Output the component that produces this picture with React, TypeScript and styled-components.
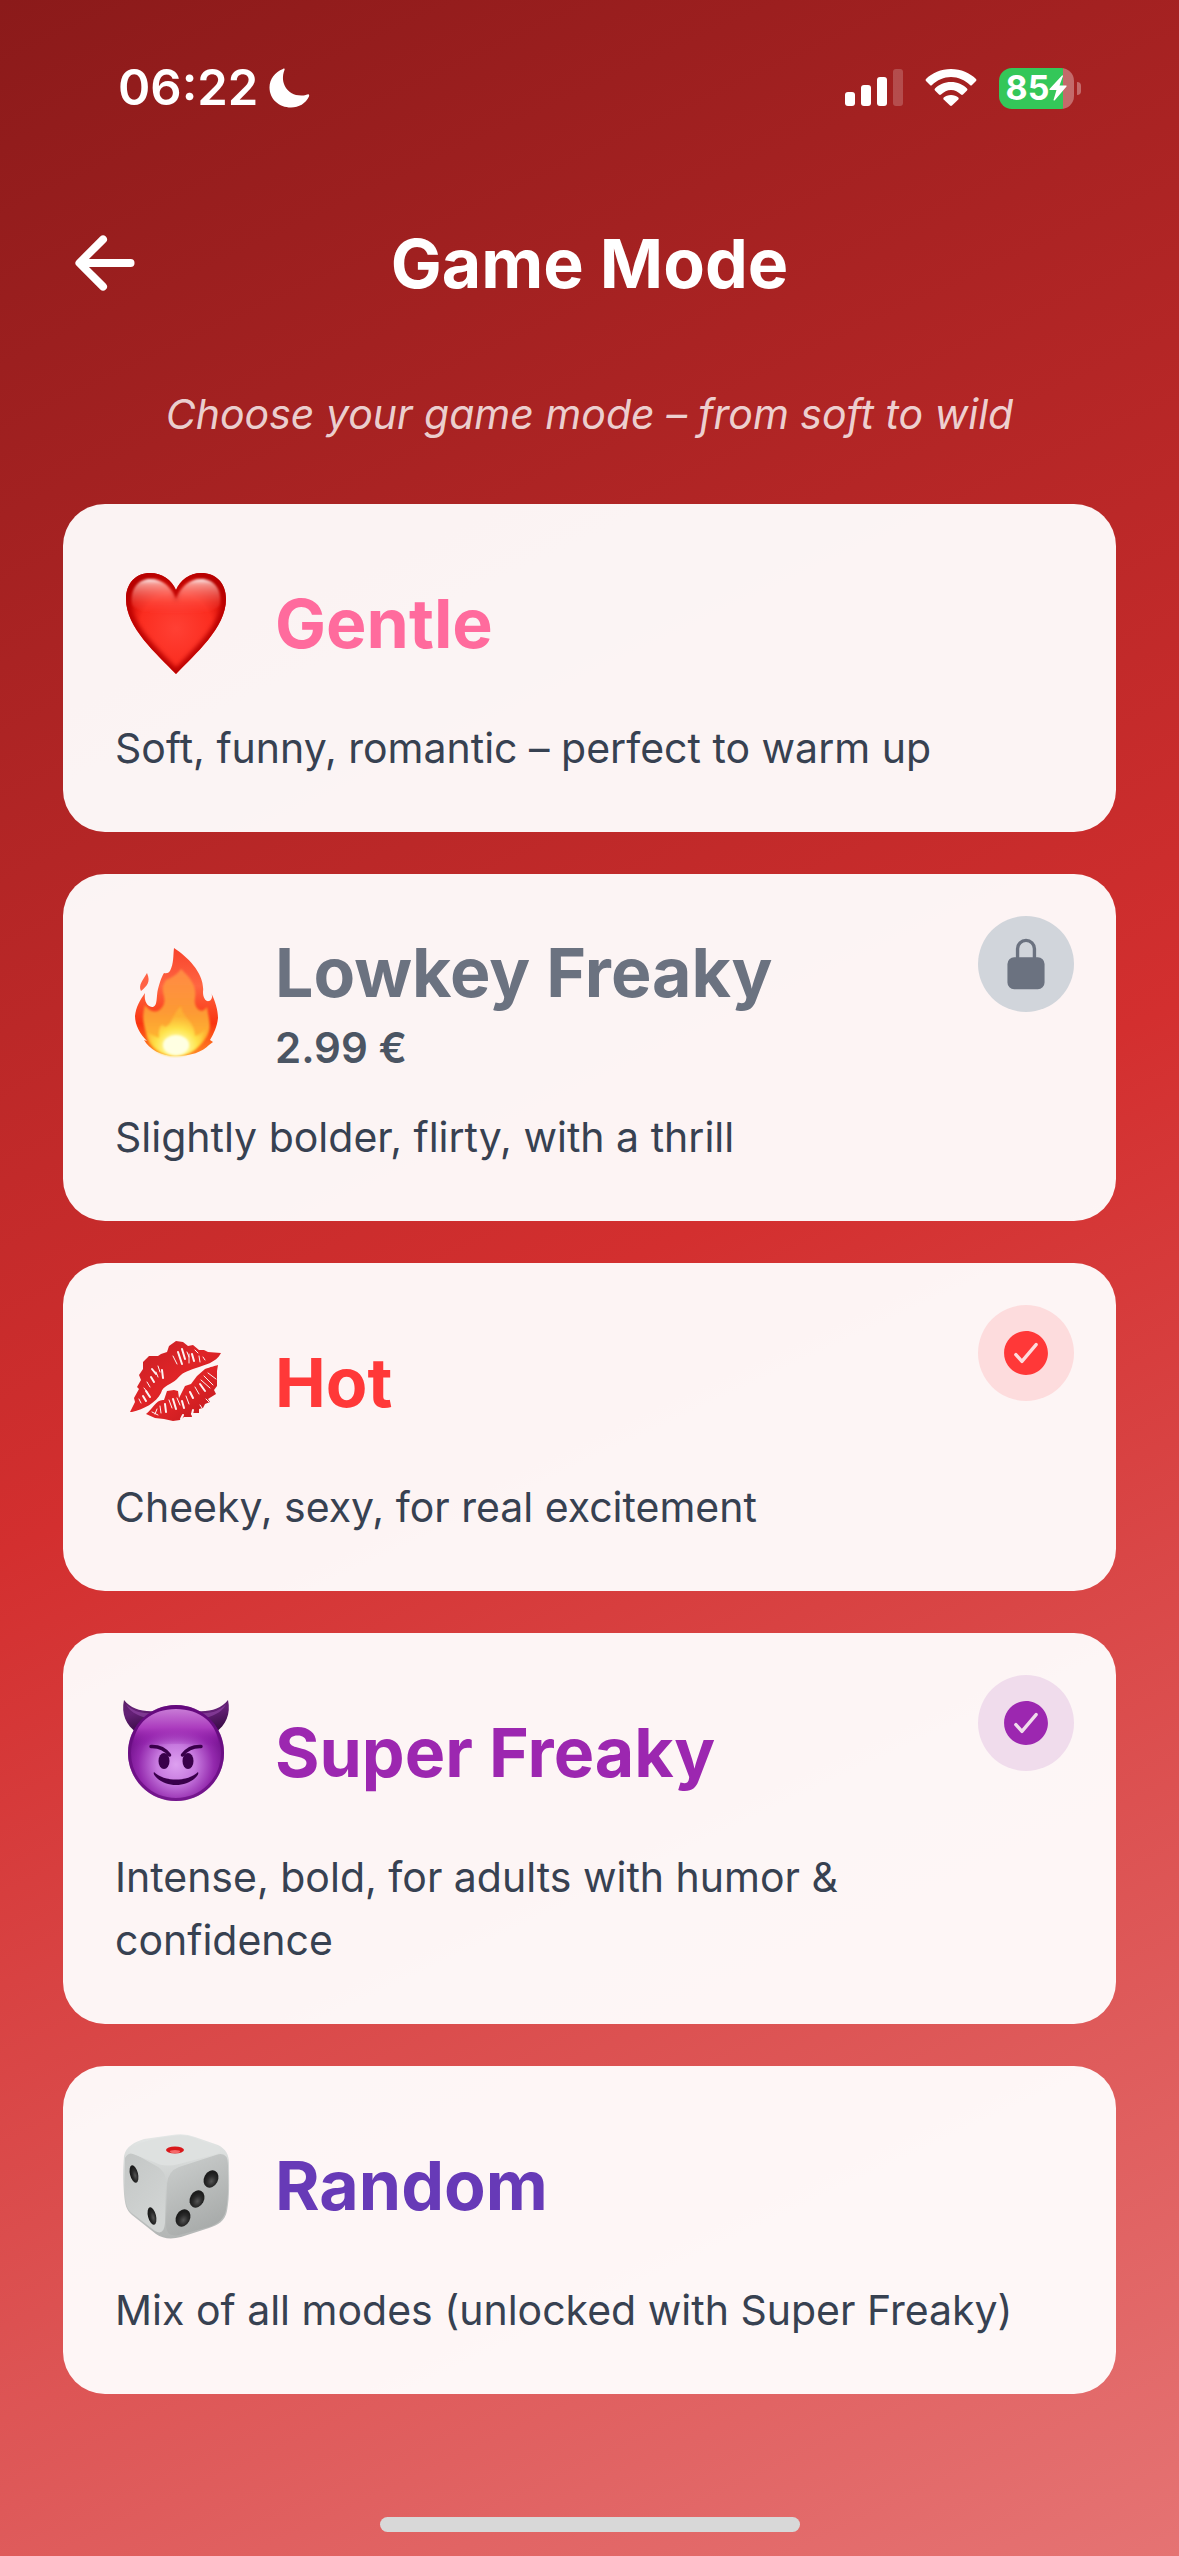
import React from "react";
import styled, { createGlobalStyle } from "styled-components";
import { IoArrowBack, IoCheckmarkCircle, IoLockClosed } from "react-icons/io5";

const GlobalStyle = createGlobalStyle`
  * { box-sizing: border-box; }
  body { margin: 0; }
`;

const Screen = styled.div`
  display: flex;
  flex-direction: column;
  min-height: 100vh;
  background: linear-gradient(155deg, #8b1a1a 0%, #d32f2f 50%, #e57373 100%);
  font-family: Inter, "Liberation Sans", sans-serif;
  color: #ffffff;
`;

const StatusBar = styled.div`
  display: flex;
  align-items: center;
  justify-content: space-between;
  height: 176px;
  padding: 0 98px 0 118px;
`;

const StatusGroup = styled.div<{ $gap: number }>`
  display: flex;
  align-items: center;
  gap: ${(p) => p.$gap}px;
`;

const Clock = styled.time`
  font-size: 49px;
  line-height: 60px;
  font-weight: 600;
`;

const BatteryBox = styled.div`
  display: flex;
  align-items: center;
  gap: 3px;
`;

const BatteryBody = styled.div<{ $level: number }>`
  display: flex;
  align-items: center;
  justify-content: center;
  width: 75px;
  height: 41px;
  border-radius: 13px;
  background: linear-gradient(
    to right,
    #34c759 ${(p) => p.$level}%,
    rgba(255, 255, 255, 0.33) ${(p) => p.$level}%
  );
  font-size: 34px;
  line-height: 40px;
  font-weight: 700;
`;

const BatteryCap = styled.span`
  width: 4px;
  height: 13px;
  border-radius: 0 6px 6px 0;
  background: rgba(255, 255, 255, 0.33);
`;

const Header = styled.header`
  display: grid;
  grid-template-columns: 84px 1fr 84px;
  align-items: center;
  height: 173px;
  padding: 0 63px;
`;

const BackButton = styled.button`
  display: flex;
  padding: 0;
  border: 0;
  background: none;
  color: inherit;
  font-size: 84px;
  cursor: pointer;
`;

const Title = styled.h1`
  margin: 0;
  font-size: 68px;
  line-height: 88px;
  font-weight: 700;
  text-align: center;
`;

const Subtitle = styled.p`
  margin: 34px 63px 58px;
  font-size: 41px;
  line-height: 63px;
  font-style: italic;
  text-align: center;
  color: rgba(255, 255, 255, 0.8);
`;

const ModeList = styled.main`
  display: flex;
  flex-direction: column;
  gap: 42px;
  padding: 0 63px;
`;

const Card = styled.button`
  position: relative;
  display: flex;
  flex-direction: column;
  gap: 28px;
  width: 100%;
  padding: 52px;
  border: 0;
  border-radius: 42px;
  background: rgba(255, 255, 255, 0.95);
  font-family: inherit;
  text-align: left;
  cursor: pointer;
`;

const CardHead = styled.span`
  display: flex;
  align-items: center;
  gap: 40px;
  min-height: 133px;
`;

const Emoji = styled.svg`
  flex: none;
  width: 120px;
  height: 120px;
`;

const Names = styled.span`
  display: flex;
  flex-direction: column;
`;

const ModeName = styled.span<{ $color: string }>`
  font-size: 68px;
  line-height: 92px;
  font-weight: 700;
  color: ${(p) => p.$color};
`;

const Price = styled.span`
  font-size: 42px;
  line-height: 60px;
  font-weight: 600;
  color: #4b5563;
`;

const Description = styled.span`
  font-size: 41px;
  line-height: 63px;
  color: #374151;
`;

const Badge = styled.span<{ $bg: string; $fg: string }>`
  position: absolute;
  top: 42px;
  right: 42px;
  display: flex;
  align-items: center;
  justify-content: center;
  width: 96px;
  height: 96px;
  border-radius: 50%;
  background: ${(p) => p.$bg};
  color: ${(p) => p.$fg};
  font-size: 54px;
`;

const HomeIndicator = styled.div`
  width: 420px;
  height: 15px;
  margin: auto auto 24px;
  border-radius: 8px;
  background: #d8d8d8;
`;

const Moon = () => (
  <svg width="42" height="42" viewBox="0 0 42 42" aria-hidden="true">
    <path
      d="M15 2C16 1 17 1.600 16.500 3C11.500 15 19 29 34 28.500C36 28.500 38 28 39.500 27.500C41 27 41.500 28 41 29.500C37.500 36.500 31 40.500 23 40.500C11 40.500 1.500 32 1.500 20.500C1.500 12 7 5 15 2Z"
      fill="#fff"
    />
  </svg>
);

const Signal = () => (
  <svg width="58" height="38" viewBox="0 0 58 38" fill="#fff" aria-hidden="true">
    <rect x="0" y="23" width="10" height="14" rx="3" />
    <rect x="16" y="16" width="10" height="21" rx="3" />
    <rect x="32" y="8" width="10" height="29" rx="3" />
    <rect x="48" y="0" width="10" height="37" rx="3" opacity="0.2" />
  </svg>
);

const Wifi = () => (
  <svg width="52" height="38" viewBox="0 0 52 38" fill="#fff" aria-hidden="true">
    <path d="M26 0C36 0 45 4 51 10Q52 11 51 12L47 16Q46 17 45 16C40 11 33 8 26 8C19 8 12 11 7 16Q6 17 5 16L1 12Q0 11 1 10C7 4 16 0 26 0Z" />
    <path d="M26 13C32.500 13 38 15.500 42 19.500Q43 20.500 42 21.500L38 25.500Q37 26.300 36 25.500C33 22.800 30 21 26 21C22 21 19 22.800 16 25.500Q15 26.300 14 25.500L10 21.500Q9 20.500 10 19.500C14 15.500 19.500 13 26 13Z" />
    <path d="M26 26C29 26 31.500 27 33.300 28.500Q34.200 29.500 33.300 30.400L27 36.600Q26 37.500 25 36.600L18.700 30.400Q17.800 29.500 18.700 28.500C20.500 27 23 26 26 26Z" />
  </svg>
);

const Bolt = () => (
  <svg width="18" height="26" viewBox="0 0 18 26" aria-hidden="true">
    <path d="M13 0.500L0.500 14Q0 15 1 15H7.500L4.500 25Q5 26 6 25L17.500 11.500Q18 10.500 17 10.500H10.500L14 1Q13.700 0 13 0.500Z" fill="#fff" />
  </svg>
);

const heartShape =
  "M61 111C42 91 11 65 11 36C11 20 21 10 35 10C47 10 57 17 61 27C65 17 75 10 86 10C101 10 111 20 111 36C111 65 80 91 61 111Z";

const Heart = () => (
  <Emoji viewBox="0 0 120 120" aria-hidden="true">
    <defs>
      <radialGradient id="heartFill" cx="0.5" cy="0.55" r="0.6">
        <stop offset="0" stopColor="#ff4034" />
        <stop offset="0.6" stopColor="#fb2d20" />
        <stop offset="0.85" stopColor="#d80f08" />
        <stop offset="1" stopColor="#b80300" />
      </radialGradient>
      <linearGradient id="heartShine" x1="0" y1="0" x2="0" y2="1">
        <stop offset="0" stopColor="#fff" stopOpacity="0.95" />
        <stop offset="0.15" stopColor="#ffc0b8" stopOpacity="0.75" />
        <stop offset="0.65" stopColor="#ff6a5e" stopOpacity="0.35" />
        <stop offset="1" stopColor="#ff4438" stopOpacity="0" />
      </linearGradient>
      <clipPath id="heartClip"><path d={heartShape} /></clipPath>
      <filter id="heartSoft"><feGaussianBlur stdDeviation="1" /></filter>
      <filter id="heartRim"><feGaussianBlur stdDeviation="2" /></filter>
    </defs>
    <path d={heartShape} fill="url(#heartFill)" />
    <g clipPath="url(#heartClip)">
      <path d={heartShape} fill="none" stroke="#b80400" strokeWidth="9" opacity="0.9" filter="url(#heartRim)" />
    </g>
    <path
      d="M17 41C15 25 24 16 35 16C48 16 56 24 61 36C66 24 74 16 86 16C98 16 107 25 105 41C103 55 20 55 17 41Z"
      fill="url(#heartShine)" filter="url(#heartSoft)"
    />
  </Emoji>
);

const Fire = () => (
  <Emoji viewBox="0 0 120 120" aria-hidden="true">
    <defs>
      <linearGradient id="fireOuter" x1="0" y1="0" x2="0" y2="1">
        <stop offset="0" stopColor="#f8432c" />
        <stop offset="0.35" stopColor="#ff6542" />
        <stop offset="0.7" stopColor="#f93410" />
        <stop offset="1" stopColor="#ff8a25" />
      </linearGradient>
      <linearGradient id="fireMiddle" x1="0" y1="0" x2="0" y2="1">
        <stop offset="0" stopColor="#ff8a45" />
        <stop offset="0.5" stopColor="#fd9a34" />
        <stop offset="1" stopColor="#ffc82b" />
      </linearGradient>
      <radialGradient id="fireCore" cx="0.5" cy="0.82" r="0.62">
        <stop offset="0" stopColor="#ffffe5" />
        <stop offset="0.3" stopColor="#fff894" />
        <stop offset="0.6" stopColor="#fee24a" />
        <stop offset="1" stopColor="#fdb535" stopOpacity="0.8" />
      </radialGradient>
      <filter id="fireSoft"><feGaussianBlur stdDeviation="1" /></filter>
    </defs>
    <path
      d="M59 6C73 15 90 32 88 50C88 56 91 60 94 59C97 58 98 54 96 51C100 58 103 68 103 76C102 85 99 91 95 98L98 100L94 103C87 110 76 114 61 114C46 114 34 107 29 98L32 99C25 92 20 83 20 74C21 65 25 58 30 51C29 58 31 64 37 65C43 65 41 55 43 47C45 40 46 36 49 31Q53 32 55 29C59 21 58 14 59 6Z"
      fill="url(#fireOuter)"
    />
    <path d="M32 31C36 40 32 44 26 49C23 43 28 38 32 31Z" fill="#ff6245" />
    <path
      d="M66 27C75 36 82 43 80 56C78 65 86 74 92 65C94 79 97 84 92 94C84 108 73 114 61 114C47 114 34 108 31 91C28 79 27 75 30 63C35 71 43 72 48 64C53 54 43 50 51 38C56 36 63 32 66 27Z"
      fill="url(#fireMiddle)" filter="url(#fireSoft)"
    />
    <path
      d="M66 64C67 76 80 79 80 94C88 91 89 89 90 86C90 100 78 114 61 114C46 114 35 104 33 91L44 96C43 84 47 80 50 85C58 82 56 74 66 64Z"
      fill="url(#fireCore)" filter="url(#fireSoft)"
    />
    <ellipse cx="61" cy="103" rx="13" ry="10" fill="#ffffe2" filter="url(#fireSoft)" />
  </Emoji>
);

const Kiss = () => (
  <Emoji viewBox="0 0 120 120" aria-hidden="true">
    <defs>
      <linearGradient id="lipsFill" x1="0" y1="0" x2="1" y2="1">
        <stop offset="0" stopColor="#c51f24" />
        <stop offset="0.5" stopColor="#e02427" />
        <stop offset="1" stopColor="#bd171c" />
      </linearGradient>
    </defs>
    <path
      d="M15 90L20 80L19 76L24 67L22 65L26 58L24 53L28 47V40L34 34L43 34L46 32L52 30L54 24L61 19L68 20L73 24L78 23L84 28L89 28L93 30L106 31C101 41 89 43 81 46C70 50 68 50 62 57C56 63 48 63 46 71C41 81 29 87 17 90Z"
      fill="url(#lipsFill)"
    />
    <path
      d="M31 92C38 87 41 77 49 78L52 69L59 68L63 69L64 76L70 64L76 62L82 54L90 47C96 45 99 44 103 43L102 49L102 64L99 68L101 72L93 77L95 80L90 82L88 86L84 87L84 91L76 91L77 95L69 95L65 98L58 99L49 97L40 96Z"
      fill="url(#lipsFill)"
    />
    <g stroke="#fdf3f3" fill="none" strokeLinecap="round">
      <path strokeWidth="2" d="M63 30L67 42M67 27L70 37M77 32L79 39M37 47L41 52M36 55L39 60M47 48L48 56M28 74L31 79M31 69L35 75" />
      <path strokeWidth="1" d="M58 34L62 42M74 32V41M72 30L74 35M84 34L85 40M88 35L90 38M32 60L35 65M29 66L33 71M43 44L45 50M41 50L43 55M24 77L26 81M80 28L83 31" />
      <path strokeWidth="2" d="M58 77L61 87M67 79L69 86M50 82L51 90M75 70L78 76M85 62L90 69M68 93L66 97M78 88L77 92" />
      <path strokeWidth="1" d="M89 54L98 63M86 58L95 66M93 51L101 57M80 65L84 72M71 74L74 82M62 76L65 83M54 78L57 86M45 84L46 91M42 87L40 92M37 90L43 93M91 77L94 80M85 83L87 86" />
    </g>
  </Emoji>
);

const Devil = () => (
  <Emoji viewBox="0 0 120 120" aria-hidden="true">
    <defs>
      <linearGradient id="hornFill" x1="0" y1="0" x2="0.3" y2="1">
        <stop offset="0" stopColor="#5c2169" />
        <stop offset="0.45" stopColor="#642076" />
        <stop offset="1" stopColor="#390c45" />
      </linearGradient>
      <radialGradient id="devilFace" cx="0.5" cy="0.62" r="0.58">
        <stop offset="0" stopColor="#dda0f0" />
        <stop offset="0.35" stopColor="#c77adf" />
        <stop offset="0.68" stopColor="#9329ad" />
        <stop offset="1" stopColor="#660980" />
      </radialGradient>
      <linearGradient id="devilShine" x1="0" y1="0" x2="0" y2="1">
        <stop offset="0" stopColor="#c87bd6" />
        <stop offset="0.5" stopColor="#ab3bbe" />
        <stop offset="1" stopColor="#8a10a5" stopOpacity="0" />
      </linearGradient>
    </defs>
    <path d="M9 8C16 17 27 20 41 19L22 41C11 33 6 22 9 8Z" fill="url(#hornFill)" />
    <path d="M113 8C106 17 95 20 81 19L100 41C111 33 116 22 113 8Z" fill="url(#hornFill)" />
    <path d="M11 12C17 19 27 22 37 21L31 26C21 23 14 19 11 12Z" fill="#8d43a1" opacity="0.7" />
    <path d="M111 12C105 19 95 22 85 21L91 26C101 23 108 19 111 12Z" fill="#8d43a1" opacity="0.7" />
    <circle cx="61" cy="61" r="48" fill="url(#devilFace)" />
    <circle cx="61" cy="61" r="46.500" fill="none" stroke="#650b7d" strokeWidth="3" opacity="0.7" />
    <path d="M18 55C19 31 37 17 61 17C85 17 103 31 104 55C91 51 31 51 18 55Z" fill="url(#devilShine)" />
    <ellipse cx="49" cy="69" rx="5.500" ry="8" fill="#39004a" />
    <ellipse cx="73" cy="69" rx="5.500" ry="8" fill="#39004a" />
    <path d="M36 54.500Q48 54 54.500 63M86 54.500Q74 54 67.500 63" stroke="#39004a" strokeWidth="3.500" fill="none" strokeLinecap="round" />
    <path d="M39 80C49 90 73 90 83 80Q84 82 82 84C72 96 50 96 40 84Q38 82 39 80Z" fill="#39004a" />
  </Emoji>
);

const Dice = () => (
  <Emoji viewBox="0 -1 120 120" aria-hidden="true">
    <defs>
      <linearGradient id="diceBase" x1="0" y1="0" x2="0" y2="1">
        <stop offset="0" stopColor="#e4e7e6" />
        <stop offset="1" stopColor="#b2b5b4" />
      </linearGradient>
      <linearGradient id="diceLeft" x1="0" y1="0" x2="0.6" y2="1">
        <stop offset="0" stopColor="#c3c6c5" />
        <stop offset="1" stopColor="#d2d5d4" />
      </linearGradient>
      <linearGradient id="diceRight" x1="0" y1="0" x2="0.4" y2="1">
        <stop offset="0" stopColor="#cdd0cf" />
        <stop offset="1" stopColor="#a9acab" />
      </linearGradient>
      <radialGradient id="dicePip" cx="0.6" cy="0.6" r="0.5">
        <stop offset="0" stopColor="#555" />
        <stop offset="0.6" stopColor="#2b2b2b" />
        <stop offset="1" stopColor="#1c1c1c" />
      </radialGradient>
    </defs>
    <path
      d="M9 30C11 20 20 16 29 13L57 9Q70 7 80 11L103 19C111 23 114 29 114 37C114 57 115 69 112 85C110 95 103 99 94 102L66 111Q51 115 41 108L17 89C11 84 10 78 9 68C8 54 8 43 9 30Z"
      fill="url(#diceBase)"
    />
    <path d="M10 32Q14 25 22 29L43 41Q50 45 51 55L50 97Q49 110 40 105L18 88C11 83 11 77 10 66Z" fill="url(#diceLeft)" />
    <path d="M52 58Q53 45 64 41L101 29Q113 25 113 39C113 57 114 70 111 84C109 93 103 98 94 101L64 109Q51 112 51 98Z" fill="url(#diceRight)" />
    <path d="M16 23Q25 14 58 10Q71 8 80 12L102 21Q110 26 98 29L64 38Q49 42 39 36L18 28Q12 26 16 23Z" fill="#dee1e0" />
    <ellipse cx="60" cy="24" rx="9" ry="3.500" fill="#d9181b" />
    <ellipse cx="60" cy="25.500" rx="5" ry="1.500" fill="#f6696a" />
    <g fill="url(#dicePip)">
      <ellipse cx="19" cy="48" rx="4" ry="9" transform="rotate(-14 19 48)" />
      <ellipse cx="37" cy="90" rx="4" ry="9" transform="rotate(-14 37 90)" />
      <ellipse cx="96" cy="53" rx="7" ry="9" transform="rotate(28 96 53)" />
      <ellipse cx="82" cy="73" rx="7" ry="9" transform="rotate(28 82 73)" />
      <ellipse cx="68" cy="92" rx="7" ry="9" transform="rotate(28 68 92)" />
    </g>
  </Emoji>
);

type Mode = {
  name: string;
  color: string;
  description: string;
  icon: React.ReactNode;
  price?: string;
  badge?: { bg: string; icon: React.ReactNode };
};

const modes: Mode[] = [
  { name: "Gentle", color: "#ff6b9d", description: "Soft, funny, romantic – perfect to warm up", icon: <Heart /> },
  {
    name: "Lowkey Freaky",
    color: "#6b7280",
    description: "Slightly bolder, flirty, with a thrill",
    icon: <Fire />,
    price: "2.99 €",
    badge: { bg: "#d1d5db", icon: <IoLockClosed title="Locked" /> },
  },
  {
    name: "Hot",
    color: "#ff3838",
    description: "Cheeky, sexy, for real excitement",
    icon: <Kiss />,
    badge: { bg: "#fddcdd", icon: <IoCheckmarkCircle title="Unlocked" /> },
  },
  {
    name: "Super Freaky",
    color: "#9c27b0",
    description: "Intense, bold, for adults with humor & confidence",
    icon: <Devil />,
    badge: { bg: "#f0dcec", icon: <IoCheckmarkCircle title="Unlocked" /> },
  },
  { name: "Random", color: "#673ab7", description: "Mix of all modes (unlocked with Super Freaky)", icon: <Dice /> },
];

export default function App() {
  return (
    <Screen>
      <GlobalStyle />
      <StatusBar>
        <StatusGroup $gap={10}>
          <Clock>06:22</Clock>
          <Moon />
        </StatusGroup>
        <StatusGroup $gap={22}>
          <Signal />
          <Wifi />
          <BatteryBox>
            <BatteryBody $level={85}>
              85
              <Bolt />
            </BatteryBody>
            <BatteryCap />
          </BatteryBox>
        </StatusGroup>
      </StatusBar>
      <Header>
        <BackButton aria-label="Back">
          <IoArrowBack />
        </BackButton>
        <Title>Game Mode</Title>
      </Header>
      <Subtitle>Choose your game mode – from soft to wild</Subtitle>
      <ModeList>
        {modes.map((mode) => (
          <Card key={mode.name} type="button">
            <CardHead>
              {mode.icon}
              <Names>
                <ModeName $color={mode.color}>{mode.name}</ModeName>
                {mode.price && <Price>{mode.price}</Price>}
              </Names>
            </CardHead>
            <Description>{mode.description}</Description>
            {mode.badge && (
              <Badge $bg={mode.badge.bg} $fg={mode.color}>
                {mode.badge.icon}
              </Badge>
            )}
          </Card>
        ))}
      </ModeList>
      <HomeIndicator />
    </Screen>
  );
}
